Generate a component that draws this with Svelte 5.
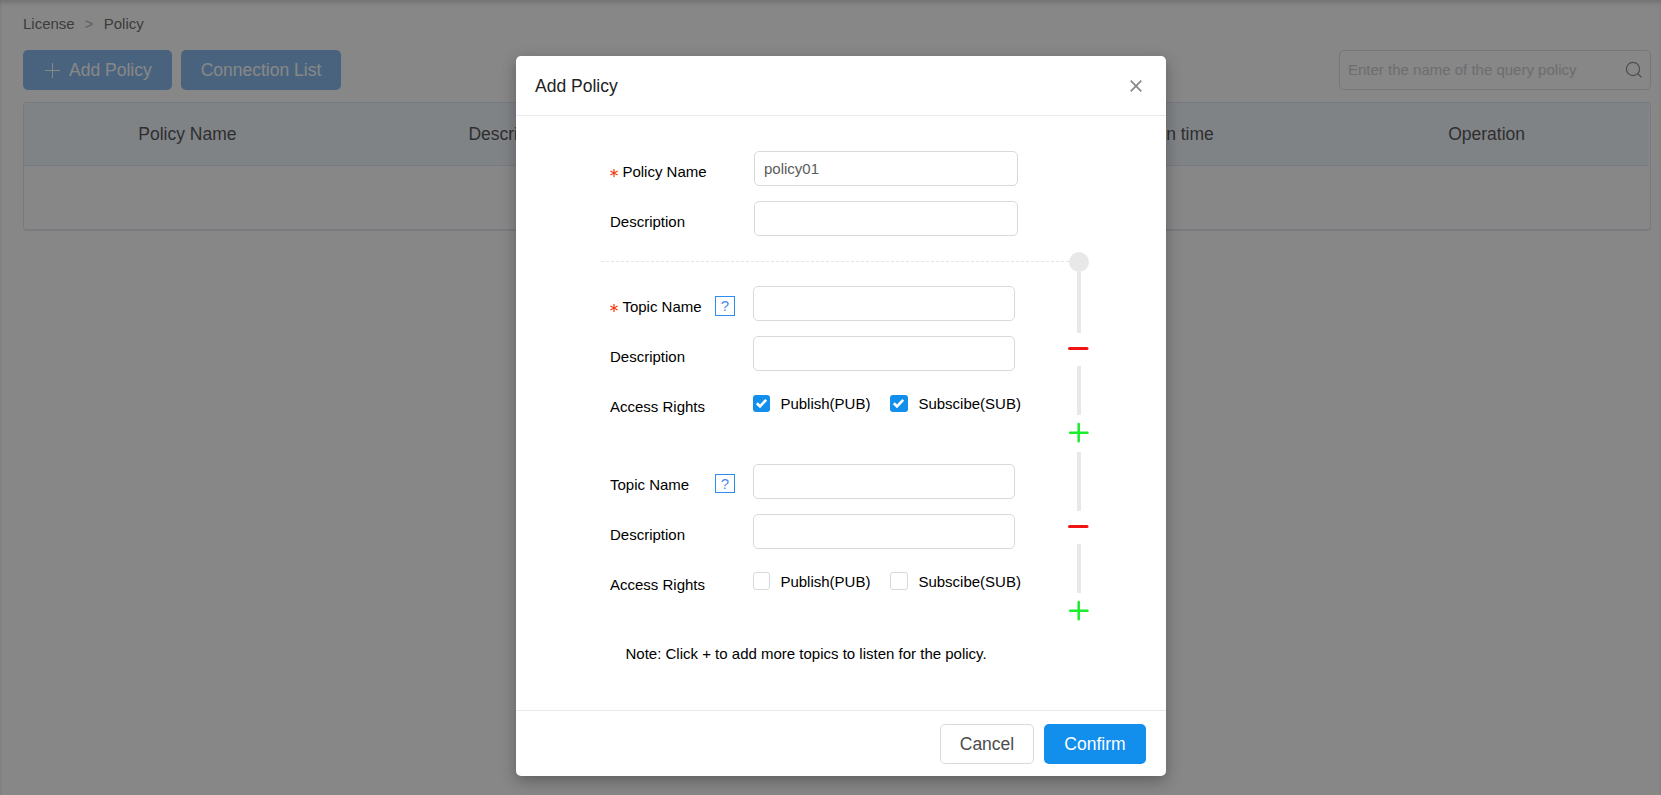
<script>
  const columns = ['Policy Name', 'Description', '', 'Creation time', 'Operation'];
  let policyName = $state('policy01');
  let topics = $state([
    { required: true, name: '', description: '', pub: true, sub: true },
    { required: false, name: '', description: '', pub: false, sub: false }
  ]);
</script>

{#snippet star()}
  <svg class="star" width="8" height="8" viewBox="0 0 8 8"><path d="M4 0v8M.4 2l7.2 4M.4 6l7.2-4" /></svg>
{/snippet}

{#snippet check(on, label)}
  <span class="check">
    <span class="box" class:on>
      {#if on}<svg viewBox="0 0 17 17"><path d="M3.8 8.2l3.2 3.1 6.2-6.5" /></svg>{/if}
    </span>
    {label}
  </span>
{/snippet}

<div class="page">
  <nav class="crumbs"><span>License</span><i>&gt;</i><span>Policy</span></nav>
  <div class="toolbar">
    <button class="tool add"><svg width="15" height="15" viewBox="0 0 15 15"><path d="M7.5 0v15M0 7.5h15" /></svg>Add Policy</button>
    <button class="tool list">Connection List</button>
    <div class="search">
      <span>Enter the name of the query policy</span>
      <svg width="18" height="18" viewBox="0 0 18 18"><circle cx="8" cy="8" r="6.6" /><path d="M12.8 12.8l3.6 3.4" /></svg>
    </div>
  </div>
  <div class="table">
    <div class="thead">
      {#each columns as c}<div>{c}</div>{/each}
    </div>
  </div>
</div>

<div class="mask">
  <section class="modal">
    <header>
      <h2>Add Policy</h2>
      <svg width="12" height="12" viewBox="0 0 12 12"><path d="M.7.7l10.6 10.6M11.3.7L.7 11.3" /></svg>
    </header>
    <div class="body">
      <div class="row basic">
        <span class="label">{@render star()}Policy Name</span>
        <input bind:value={policyName} />
      </div>
      <div class="row basic">
        <span class="label">Description</span>
        <input />
      </div>
      <div class="divider"><span class="dash"></span><span class="dot"></span></div>
      {#each topics as t, i}
        <div class="topic">
          <div class="fields">
            <div class="row">
              <span class="label">{#if t.required}{@render star()}{/if}Topic Name</span>
              <span class="help" class:short={i > 0}>?</span>
              <input bind:value={t.name} />
            </div>
            <div class="row">
              <span class="label">Description</span>
              <input bind:value={t.description} />
            </div>
            <div class="row rights">
              <span class="label">Access Rights</span>
              {@render check(t.pub, 'Publish(PUB)')}
              {@render check(t.sub, 'Subscibe(SUB)')}
            </div>
          </div>
          <div class="rail" class:first={i === 0}>
            <span class="bar upper"></span>
            <svg class="minus" width="21" height="33" viewBox="0 0 21 33"><path d="M1.5 15.5h17.5" /></svg>
            <span class="bar lower"></span>
            <svg class="plus" width="21" height="37" viewBox="0 0 21 37"><path d="M2.2 17.7h17.3M10.7 9v17.3" /></svg>
          </div>
        </div>
      {/each}
      <p class="note">Note: Click + to add more topics to listen for the policy.</p>
    </div>
    <footer>
      <button class="cancel">Cancel</button>
      <button class="confirm">Confirm</button>
    </footer>
  </section>
</div>

<style>
  :global(body) { background: #fff; overflow: hidden; }
  :global(*) { box-sizing: border-box; }
  .page, .mask { font-family: 'Liberation Sans', Arial, sans-serif; font-size: 15px; }
  svg { fill: none; stroke: currentColor; display: block; flex: none; }
  button { font: inherit; border: 0; padding: 0; border-radius: 5px; height: 40px; }
  .page { height: 795px; padding: 14px 10px 0 23px; color: #333; box-shadow: inset 0 4px 4px -1px rgba(0, 0, 0, .2), inset 1px 0 1px rgba(0, 0, 0, .03); }
  .crumbs { display: flex; height: 20px; line-height: 20px; color: #444; }
  .crumbs i { font-style: normal; font-size: 14px; width: 29px; text-align: center; color: #999; }
  .toolbar { display: flex; margin-top: 16px; gap: 9px; font-size: 17.5px; }
  .tool { background: #64a5e8; color: #fff; }
  .add { width: 149px; display: flex; align-items: center; padding-left: 22px; gap: 9px; }
  .list { width: 160px; }
  .search { margin-left: auto; width: 312px; height: 40px; border: 1px solid #d5d6d9; border-radius: 5px; display: flex; align-items: center; justify-content: space-between; padding: 0 7px 1px 8px; font-size: 15px; color: #bbbec4; }
  .search svg { color: #6b7078; stroke-width: 1.2; margin-top: 1px; }
  .table { margin-top: 12px; height: 129px; border: 1px solid #d8dfea; border-bottom: 2px solid #dfe0ea; border-radius: 4px; }
  .thead { height: 63px; margin-right: 1px; display: grid; grid-template-columns: repeat(5, 1fr); align-items: center; text-align: center; font-size: 17.5px; color: #222; background: #edf4fc; border-bottom: 1px solid #d8e0ea; padding: 1px 0 0 1px; }
  .mask { position: absolute; inset: 0; background: rgba(55, 55, 55, .6); display: flex; justify-content: center; align-items: flex-start; padding: 56px 0 0 21px; }
  .modal { width: 650px; height: 720px; background: #fff; border-radius: 5px; box-shadow: 0 5px 15px rgba(0, 0, 0, .3); display: flex; flex-direction: column; color: #000; }
  header { height: 60px; border-bottom: 1px solid #e9e9e9; display: flex; justify-content: space-between; align-items: center; padding: 0 24px 0 19px; }
  header svg { color: #888; stroke-width: 1.7; }
  h2 { margin: 1px 0 0; font-size: 17.5px; font-weight: 400; color: #222; }
  .body { flex: 1; padding: 35px 77px 0 85px; }
  .row { display: flex; height: 35px; margin-bottom: 15px; padding-left: 9px; }
  .label { width: 143px; height: 35px; line-height: 42px; flex: none; white-space: nowrap; }
  .basic .label { width: 144px; }
  .star { display: inline-block; margin-right: 4.4px; color: #ed3f14; stroke-width: 1.2; }
  input { width: 262px; height: 35px; border: 1px solid #d7dadd; border-radius: 5px; padding: 0 9px; font: 15px 'Liberation Sans', Arial, sans-serif; color: #5c5c5c; background: #fff; outline: 0; }
  .basic input { width: 264px; }
  .help { width: 20px; height: 20px; line-height: 18px; margin: 10px 18px 0 -38px; border: 1px solid #2d8cf0; color: #4b8bf0; text-align: center; font-size: 15px; }
  .short { height: 19px; line-height: 18px; }
  .divider { display: flex; height: 20px; margin-top: 16px; }
  .dash { width: 468px; height: 10px; border-bottom: 1px dashed #e5e5e5; }
  .dot { width: 20px; height: 20px; border-radius: 50%; background: #e8e8e8; }
  .topic { display: flex; height: 178px; }
  .fields { flex: 1; padding-top: 14px; }
  .check { display: flex; align-items: flex-start; height: 35px; line-height: 17px; padding-top: 9px; width: 137px; gap: 10.4px; flex: none; white-space: nowrap; }
  .box { width: 17px; height: 18px; margin-top: -1px; border: 1px solid #d7dadd; border-radius: 3px; flex: none; }
  .check + .check .box { width: 18px; }
  .box.on { border: 0; height: 17px; margin-top: 0; background: #128eed; }
  .box svg { width: 17px; height: 17px; color: #fff; stroke-width: 2.6; }
  .rail { width: 21px; height: 180px; flex: none; display: flex; flex-direction: column; align-items: center; }
  .bar { width: 4px; flex: none; background: #e8e8e8; }
  .upper { height: 61px; }
  .lower { height: 49px; }
  .rail:not(.first) { height: 178px; margin-top: 2px; }
  .rail:not(.first) .upper { height: 59px; }
  .minus { color: #f01414; stroke-width: 3; stroke-linecap: round; }
  .plus { color: #19ee2c; stroke-width: 2.5; stroke-linecap: round; }
  .note { margin: 16px 0 0 24.5px; line-height: 20px; }
  footer { height: 66px; border-top: 1px solid #e9e9e9; display: flex; justify-content: flex-end; gap: 10px; padding: 13px 20px 0 0; font-size: 17.5px; }
  .cancel { width: 94px; border: 1px solid #d7dadd; background: #fff; color: #4d4d4d; }
  .confirm { width: 102px; background: #128eed; color: #fff; }
</style>
